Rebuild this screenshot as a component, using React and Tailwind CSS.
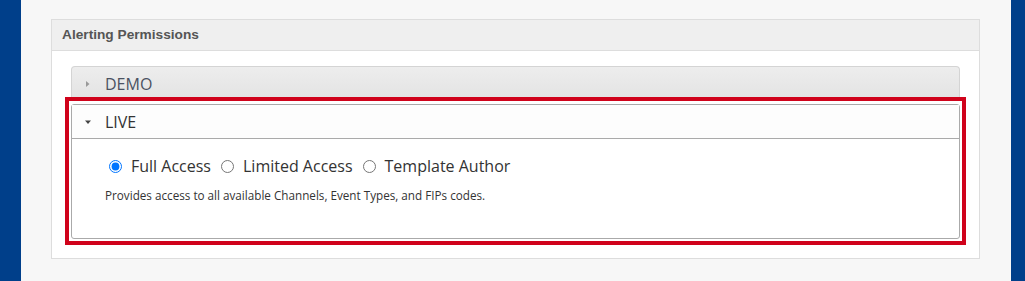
import { useState } from "react";

const OPTIONS = ["Full Access", "Limited Access", "Template Author"];

const DESCRIPTIONS = {
  "Full Access": "Provides access to all available Channels, Event Types, and FIPs codes.",
  "Limited Access": "Provides access to selected Channels, Event Types, and FIPs codes.",
  "Template Author": "Allows creating and editing alert templates.",
};

const Caret = ({ open }) => (
  <svg width="8" height="8" viewBox="0 0 8 8" className={open ? "fill-[#444]" : "fill-[#999]"}>
    {open ? <path d="M1 2.5h6L4 6z" /> : <path d="M2 1v6L5.5 4z" />}
  </svg>
);

const App = () => {
  const [access, setAccess] = useState("Full Access");

  return (
    <div className="flex h-[281px] w-full bg-[#f7f7f7]" style={{ fontFamily: '"Open Sans", "Noto Sans", sans-serif' }}>
      <div className="w-[21px] shrink-0 bg-[#003f8a]" />

      <main className="flex-1 pl-[30px] pr-[31px] pt-[19px]">
        {/* Panel */}
        <section className="border border-[#dddddd] bg-white">
          <header className="flex h-[31px] items-center border-b border-[#dddddd] bg-[#efefef] px-[10px]">
            <h2 className="text-[13.7px] font-bold text-[#555]" style={{ fontFamily: '"Liberation Sans", Arial, sans-serif' }}>
              Alerting Permissions
            </h2>
          </header>

          <div className="px-[19px] pb-[13px] pt-[15px]">
            {/* DEMO (collapsed) */}
            <div className="flex h-[34px] items-center gap-[13px] rounded-t-[4px] border border-b-0 border-[#d4d4d4] bg-gradient-to-b from-[#ededed] to-[#e3e3e3] pl-[12px] text-[16px] text-[#4b5262]">
              <Caret />
              <span>DEMO</span>
            </div>

            {/* Highlight around the open LIVE section */}
            <div className="-mx-[6px] -mt-[3px] relative border-4 border-[#d0021b] px-[2px] pb-[2px] pt-[3px]">
              <div className="rounded-[3px] border border-[#aaaaaa] bg-white">
                <div className="flex h-[34px] items-center gap-[13px] border-b border-[#aaaaaa] bg-[#fdfdfd] pl-[12px] text-[16px] text-[#333]">
                  <Caret open />
                  <span>LIVE</span>
                </div>
                <div className="h-[99px] pl-[37px] pt-[15px] text-[#333]">
                  <div className="flex items-center gap-[10px] text-[16px]">
                    {OPTIONS.map((opt) => (
                      <label key={opt} className="flex items-center gap-[9px]">
                        <input
                          type="radio"
                          name="live-access"
                          checked={access === opt}
                          onChange={() => setAccess(opt)}
                          className="m-0 h-[13px] w-[13px]"
                        />
                        <span>{opt}</span>
                      </label>
                    ))}
                  </div>
                  <p className="-ml-[4px] mt-[9px] text-[11.7px]">{DESCRIPTIONS[access]}</p>
                </div>
              </div>
            </div>
          </div>
        </section>
      </main>

      <div className="w-[14px] shrink-0 bg-[#003f8a]" />
    </div>
  );
};

export default App;
